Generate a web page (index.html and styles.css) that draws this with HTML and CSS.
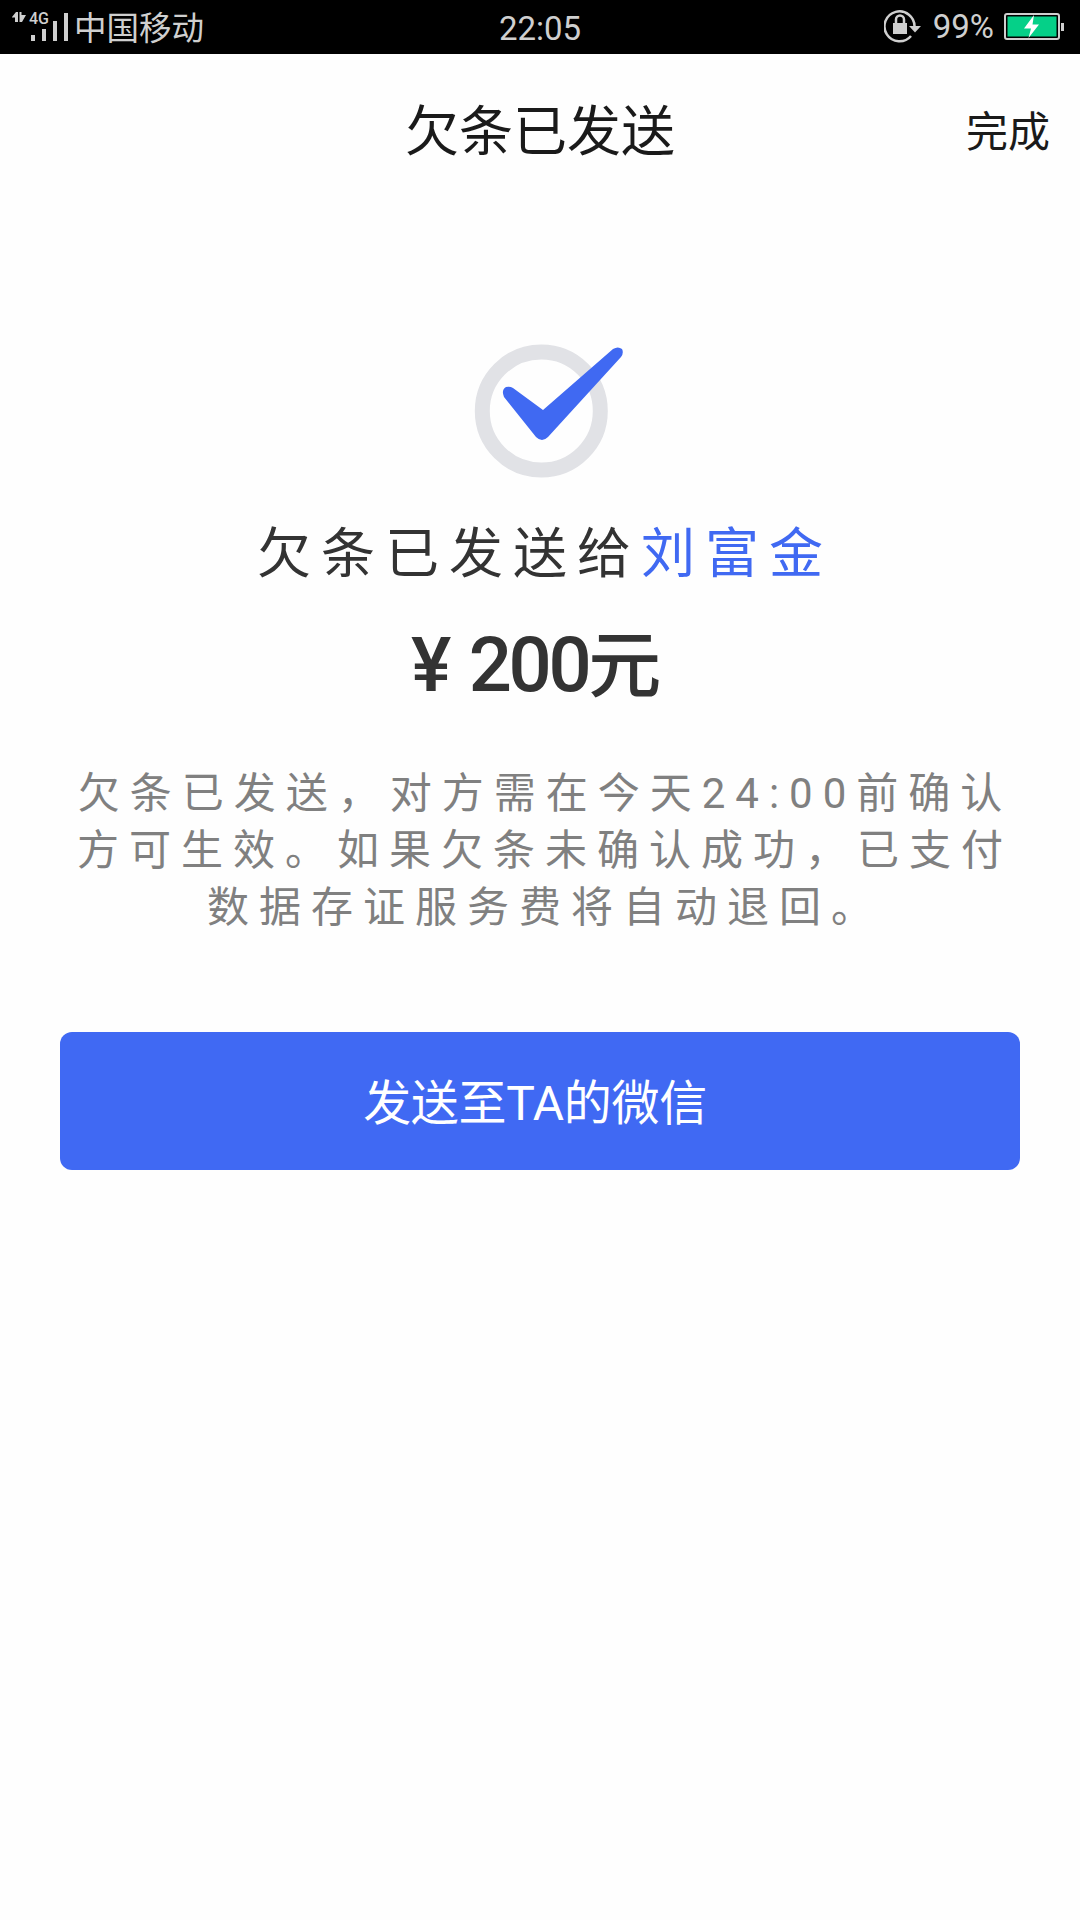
FILE: index.html
```
<!DOCTYPE html>
<html lang="zh-CN">

<head>
    <meta charset="UTF-8">
    <meta name="viewport" content="width=device-width, initial-scale=1.0">
    <title>欠条已发送</title>
    <link rel="stylesheet" href="styles.css">
</head>

<body>
    <!-- 状态栏 -->
    <div class="status">
        <div class="status-left">
            <svg class="signal" width="60" height="54" viewBox="0 0 60 54">
                <path d="M12 17L16 12H18V22H15V17.500H12ZM19.500 12H21.500V15H26L22 22H19.500Z" />
                <text x="29" y="24">4G</text>
                <path d="M31 35h4v6h-4zM42 29h4v12h-4zM53 21h4v20h-4z" />
            </svg>
            <i class="bar"></i>
            <span class="carrier">中国移动</span>
        </div>
        <div class="time">22:05</div>
        <div class="status-right">
            <svg class="lock" width="38" height="34" viewBox="0 0 38 34">
                <path class="line" d="M30.500 17A15 15 0 1 0 27 26" />
                <path d="M25 16h12l-6 6.500z" />
                <path d="M9 13h14v11h-14z" />
                <path class="line" d="M12 13v-3.500a4 4 0 0 1 8 0v3.500" />
            </svg>
            <span class="percent">99%</span>
            <svg class="battery" width="60" height="28" viewBox="0 0 60 28">
                <rect class="shell" x="1" y="1" width="54" height="25" rx="2" />
                <rect class="power" x="3.500" y="3.500" width="49" height="20" />
                <path class="flash" d="M30 2L20 15.500h7L24.500 25 35 11.500h-6.500z" />
                <path d="M57 10h3v8h-3z" />
            </svg>
        </div>
    </div>

    <!-- 标题 -->
    <div class="header">
        <h1>欠条已发送</h1>
        <a class="done">完成</a>
    </div>

    <div class="content">
        <svg class="success" width="180" height="160" viewBox="0 0 180 160">
            <circle cx="81.300" cy="81" r="59" />
            <path d="M53 58L83 80L153 19Q158 16 162 19Q164 23 161 27L88 107Q82 113 76 107L44 67Q41 60 46 57Q50 56 53 58Z" />
        </svg>
        <p class="sent">欠条已发送给<span class="name">刘富金</span></p>
        <p class="money">¥ 200<span class="unit">元</span></p>
        <p class="tip">欠条已发送，对方需在今天24:00前确认<br>方可生效。如果欠条未确认成功，已支付<br>数据存证服务费将自动退回。</p>
        <button class="btn">发送至TA的微信</button>
    </div>
</body>

</html>
```

FILE: styles.css
```
body {
    margin: 0;
    background-color: #fefefe;
    font-family: Roboto, "Noto Sans CJK SC", sans-serif;
}

h1,
p {
    margin: 0;
    font-weight: 400;
}

button {
    border: 0;
    outline: none;
}

svg {
    display: block;
    flex: none;
}

.status {
    display: grid;
    grid-template-columns: 1fr auto 1fr;
    height: 54px;
    background-color: #000;
    color: #cfcfcf;
    fill: #cfcfcf;
}

.status-left,
.status-right {
    display: flex;
    align-items: center;
    height: 54px;
}

.signal text {
    font: 500 16px Roboto, sans-serif;
}

.bar {
    width: 4px;
    height: 28px;
    margin-left: 4px;
    background-color: #cfcfcf;
}

.carrier {
    margin-left: 6px;
    padding-top: 4px;
    font-size: 32.500px;
    line-height: 50px;
}

.time {
    font-size: 33px;
    line-height: 58px;
}

.status-right {
    box-sizing: border-box;
    justify-content: flex-end;
    padding: 0 16px 1px 0;
}

.lock .line {
    fill: none;
    stroke: #cfcfcf;
    stroke-width: 2.500;
}

.percent {
    margin: 0 10px 0 11px;
    font-size: 33px;
    line-height: 52px;
}

.battery .shell {
    fill: none;
    stroke: #cfcfcf;
    stroke-width: 2;
}

.battery .power {
    fill: #05d088;
}

.battery .flash {
    fill: #fff;
}

.header {
    display: grid;
    grid-template-columns: 1fr auto 1fr;
    align-items: center;
    height: 150px;
    color: #1a1a1a;
}

.header h1 {
    grid-column: 2;
    padding-top: 8px;
    font-size: 54px;
    line-height: 80px;
}

.done {
    justify-self: end;
    padding: 0 30px 2px 0;
    font-size: 42px;
}

.content {
    display: flex;
    flex-direction: column;
    padding: 126px 60px 0;
    text-align: center;
    color: #333;
}

.success {
    margin-left: 400px;
}

.success circle {
    fill: none;
    stroke: #e1e2e6;
    stroke-width: 15;
}

.success path {
    fill: #4069f2;
}

.sent {
    margin-top: 25px;
    padding-left: 10px;
    font-size: 54px;
    line-height: 80px;
    letter-spacing: 10px;
}

.name {
    color: #4069f2;
}

.money {
    height: 99px;
    margin-top: 20px;
    padding-right: 11px;
    font-size: 76px;
    font-weight: 500;
    line-height: 101px;
    letter-spacing: -3.300px;
    word-spacing: 5px;
}

.unit {
    font-size: 73px;
}

.tip {
    margin-top: 51px;
    padding-left: 10px;
    font-size: 42px;
    line-height: 57px;
    letter-spacing: 10px;
    white-space: nowrap;
    color: #808080;
}

.btn {
    height: 138px;
    margin-top: 96px;
    padding: 0 10px 4px 0;
    border-radius: 12px;
    background-color: #4069f3;
    color: #fff;
    font-family: inherit;
    font-size: 48px;
    letter-spacing: -0.300px;
}
```
